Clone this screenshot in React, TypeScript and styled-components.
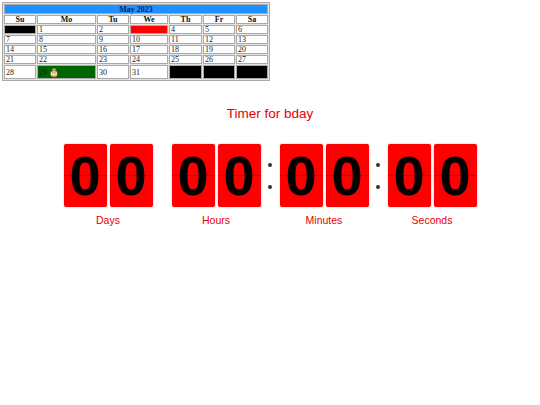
import React from "react";
import styled, { createGlobalStyle } from "styled-components";

const GlobalStyle = createGlobalStyle`
	html, body {
		margin: 0;
		padding: 0;
		background: #ffffff;
	}
	body {
		font-family: "Liberation Sans", Arial, sans-serif;
	}
`;

const Page = styled.div`
	width: 540px;
	height: 405px;
	padding: 2px;
	box-sizing: border-box;
	display: flex;
	flex-direction: column;
`;

const CalendarTable = styled.table`
	border: 1px solid #a9a9a9;
	border-spacing: 1px;
	background: #e4e4e4;
	font-family: "Liberation Serif", "Times New Roman", serif;
	font-size: 8px;
	line-height: 7px;
	align-self: flex-start;
`;

const MonthCell = styled.th`
	background: #1e90ff;
	color: #0b1f5c;
	font-weight: bold;
	text-align: center;
	border: 1px solid #a9a9a9;
	padding: 0;
	height: 8px;
`;

const DayName = styled.th<{ $w: number }>`
	width: ${(p) => p.$w}px;
	background: #ffffff;
	color: #111;
	font-weight: bold;
	text-align: center;
	border: 1px solid #a9a9a9;
	padding: 0;
	height: 7px;
`;

const DateCell = styled.td<{ $bg?: string; $fg?: string; $tall?: boolean }>`
	background: ${(p) => p.$bg || "#ffffff"};
	color: ${(p) => p.$fg || "#222"};
	border: 1px solid #a9a9a9;
	padding: 0 0 0 1px;
	height: ${(p) => (p.$tall ? 12 : 7)}px;
	text-align: left;
	vertical-align: middle;
	white-space: nowrap;
`;

const TimerSection = styled.section`
	display: flex;
	flex-direction: column;
	align-items: center;
	margin-top: 25px;
`;

const Title = styled.h2`
	margin: 0;
	font-size: 13.5px;
	line-height: 16px;
	font-weight: normal;
	color: #e60000;
`;

const Countdown = styled.div`
	display: flex;
	align-items: flex-start;
	margin-top: 22px;
`;

const Unit = styled.div`
	display: flex;
	flex-direction: column;
	align-items: center;
`;

const Cards = styled.div`
	display: flex;
	gap: 3px;
`;

const Card = styled.div`
	position: relative;
	width: 43px;
	height: 63px;
	background: #ff0000;
	border-radius: 2px;
	box-shadow: 0 0 2px rgba(0, 0, 0, 0.25);
	color: #000;
	font-size: 56px;
	font-weight: bold;
	line-height: 63px;
	text-align: center;

	&::after {
		content: "";
		position: absolute;
		left: 0;
		right: 0;
		top: 31px;
		height: 1px;
		background: rgba(0, 0, 0, 0.18);
	}
`;

const Label = styled.div`
	margin-top: 7px;
	font-size: 10.5px;
	line-height: 12px;
	color: #e60000;
`;

const Separator = styled.div<{ $dots: boolean }>`
	width: 19px;
	height: 63px;
	display: flex;
	flex-direction: column;
	align-items: center;
	justify-content: center;
	gap: 18px;

	&::before,
	&::after {
		content: "";
		display: ${(p) => (p.$dots ? "block" : "none")};
		width: 4px;
		height: 4px;
		border-radius: 50%;
		background: #333;
	}
`;

const dayNames = [
	{ name: "Su", w: 30 },
	{ name: "Mo", w: 57 },
	{ name: "Tu", w: 30 },
	{ name: "We", w: 36 },
	{ name: "Th", w: 31 },
	{ name: "Fr", w: 30 },
	{ name: "Sa", w: 30 },
];

interface Day {
	text: string;
	bg?: string;
	fg?: string;
}

const weeks: Day[][] = [
	[
		{ text: "", bg: "#000000" },
		{ text: "1" },
		{ text: "2" },
		{ text: "3", bg: "#ff0000", fg: "#c00000" },
		{ text: "4" },
		{ text: "5" },
		{ text: "6" },
	],
	[7, 8, 9, 10, 11, 12, 13].map((n) => ({ text: String(n) })),
	[14, 15, 16, 17, 18, 19, 20].map((n) => ({ text: String(n) })),
	[21, 22, 23, 24, 25, 26, 27].map((n) => ({ text: String(n) })),
	[
		{ text: "28" },
		{ text: "29 \u{1F382}", bg: "#006400", fg: "#002a00" },
		{ text: "30" },
		{ text: "31" },
		{ text: "", bg: "#000000" },
		{ text: "", bg: "#000000" },
		{ text: "", bg: "#000000" },
	],
];

const units = ["Days", "Hours", "Minutes", "Seconds"];

function Calendar() {
	return (
		<CalendarTable>
			<thead>
				<tr>
					<MonthCell colSpan={7}>May 2023</MonthCell>
				</tr>
				<tr>
					{dayNames.map((d) => (
						<DayName key={d.name} $w={d.w}>
							{d.name}
						</DayName>
					))}
				</tr>
			</thead>
			<tbody>
				{weeks.map((week, i) => (
					<tr key={i}>
						{week.map((day, j) => (
							<DateCell
								key={j}
								$bg={day.bg}
								$fg={day.fg}
								$tall={i === weeks.length - 1}>
								{day.text}
							</DateCell>
						))}
					</tr>
				))}
			</tbody>
		</CalendarTable>
	);
}

function Timer() {
	return (
		<TimerSection>
			<Title>Timer for bday</Title>
			<Countdown>
				{units.map((u, i) => (
					<React.Fragment key={u}>
						{i > 0 && <Separator $dots={i > 1} />}
						<Unit>
							<Cards>
								<Card>0</Card>
								<Card>0</Card>
							</Cards>
							<Label>{u}</Label>
						</Unit>
					</React.Fragment>
				))}
			</Countdown>
		</TimerSection>
	);
}

export default function App() {
	return (
		<>
			<GlobalStyle />
			<Page>
				<Calendar />
				<Timer />
			</Page>
		</>
	);
}
